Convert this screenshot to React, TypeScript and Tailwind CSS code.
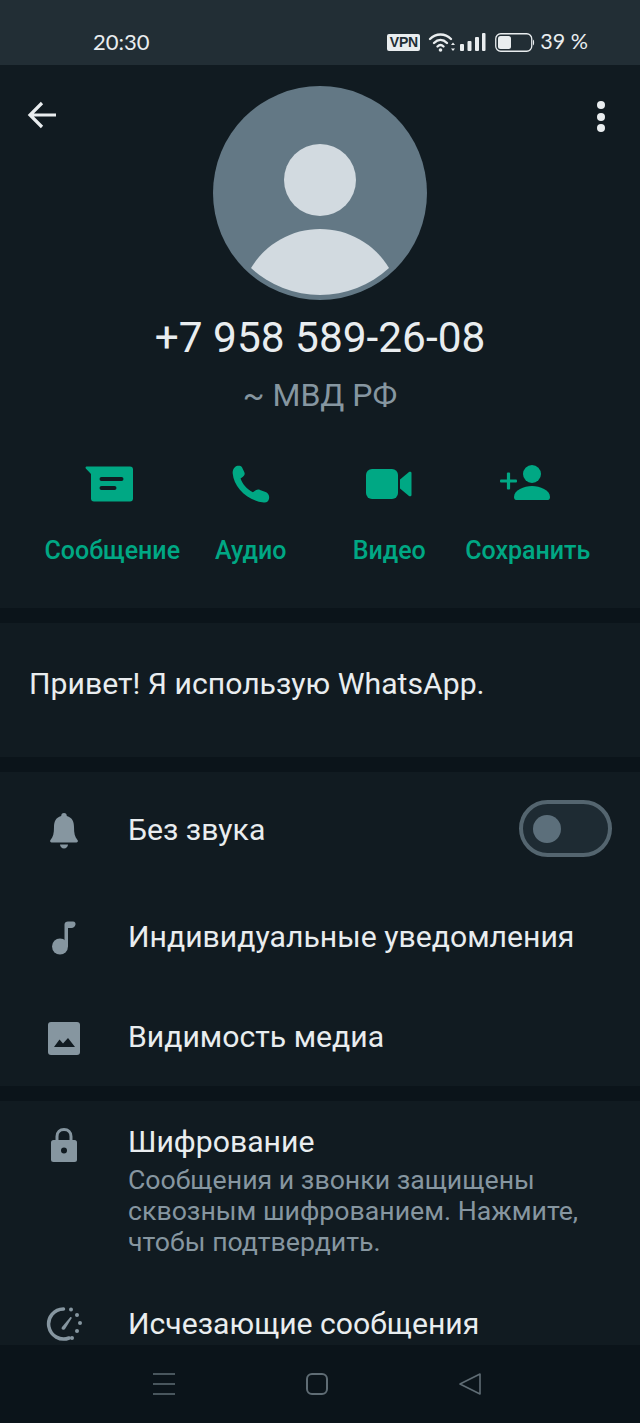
import React from 'react';

const font = { fontFamily: 'Roboto, sans-serif' };

const StatusBar = () => (
  <div className="h-[65px] shrink-0 bg-[#222e35] flex items-center pt-[19px] pl-[93px] pr-[52px] text-[#e9edef]">
    <span className="text-[22px] leading-none font-['Lato',sans-serif]">20:30</span>
    <div className="ml-auto flex items-center">
      <span className="w-[33px] h-[17px] rounded-[2px] bg-[#e9edef] text-[#222e35] text-[14px] font-bold leading-[17px] text-center font-['Liberation_Sans',sans-serif] tracking-[-0.3px]">VPN</span>
      <svg width="28" height="20" viewBox="0 0 28 20" className="ml-[8px]" fill="none" stroke="#e9edef" strokeLinecap="round">
        <path d="M2 7C8 1 17 1 23 7" strokeWidth="2.400" />
        <path d="M6 11c4-4 9-4 13 0" strokeWidth="2.400" />
        <path d="M9.500 14.500c2-2 4-2 6 0" strokeWidth="2.400" />
        <circle cx="12.500" cy="18" r="1.800" fill="#e9edef" stroke="none" />
        <path d="M25 10.500l2 2.500h-4zM25 19l2-2.500h-4z" fill="#e9edef" stroke="none" />
      </svg>
      <svg width="26" height="18" viewBox="0 0 26 18" className="ml-[4px]" fill="#e9edef">
        <rect x="0" y="11" width="4" height="7" rx="1" />
        <rect x="7.500" y="8" width="4" height="10" rx="1" />
        <rect x="15" y="4" width="4" height="14" rx="1" />
        <rect x="22" y="0" width="3.500" height="18" rx="1" />
      </svg>
      <svg width="40" height="19" viewBox="0 0 40 19" className="ml-[9px]" fill="none">
        <rect x="0.750" y="0.750" width="36" height="17.500" rx="5" stroke="#e9edef" strokeWidth="1.300" />
        <rect x="3" y="3" width="13" height="13" rx="2.500" fill="#e9edef" />
        <path d="M38 6.500c1.500.5 1.500 5.500 0 6z" fill="#e9edef" />
      </svg>
      <span className="ml-[5px] text-[21.500px] leading-none font-['Lato',sans-serif]">39 %</span>
    </div>
  </div>
);

const Avatar = () => (
  <svg width="214" height="214" viewBox="0 0 214 214" className="block">
    <circle cx="107" cy="107" r="107" fill="#637885" />
    <circle cx="107" cy="94" r="36" fill="#d2dae0" />
    <path d="M38 182A80.500 80.500 0 0 1 176 182A102 102 0 0 1 38 182Z" fill="#d2dae0" />
  </svg>
);

const actions = [
  {
    label: 'Сообщение',
    icon: (
      <svg width="49" height="36" viewBox="0 0 49 36" fill="#00a884" className="mr-[5px]">
        <path fillRule="evenodd" d="M1.500 0.500H45a3 3 0 0 1 3 3V32.500a3 3 0 0 1-3 3H9a3 3 0 0 1-3-3V8L.8 2.500C.2 1.600.6.500 1.500.500ZM16.500 11a2 2 0 0 0 0 4h20a2 2 0 0 0 0-4ZM16.500 20a2 2 0 0 0 0 4h13a2 2 0 0 0 0-4Z" />
      </svg>
    ),
  },
  {
    label: 'Аудио',
    icon: (
      <svg width="38" height="38" viewBox="0 0 40 42" preserveAspectRatio="none" fill="#00a884">
        <path d="M3 2.500C5 .5 9 .3 10.500 2.500L13 8c.8 2 .2 3.500-1.500 5L9 15c2 6 6.500 12 13 15l3-2c1.500-1 3-1 4.500-.5L36 30c2.500 1.500 3.500 4 3 7-.5 3-2.500 5-5.500 4.500C16 39 2 25 .7 9 .5 6.500 1.500 4 3 2.500Z" />
      </svg>
    ),
  },
  {
    label: 'Видео',
    icon: (
      <svg width="46" height="30" viewBox="0 0 46 30" fill="#00a884">
        <rect x="0" y="0" width="32" height="30" rx="6" />
        <path d="M34 10.500L43 3c1-.8 2.500-.2 2.500 1V26c0 1.200-1.500 1.800-2.500 1L34 19.500Z" />
      </svg>
    ),
  },
  {
    label: 'Сохранить',
    icon: (
      <svg width="50" height="36" viewBox="0 0 50 36" fill="#00a884" className="mr-[5px] mb-[3px]">
        <circle cx="32" cy="9" r="9" />
        <path d="M14 32C14 25 24 21 32 21S50 25 50 32c0 2-1 3-2 3H16c-1 0-2-1-2-3Z" />
        <rect x="0" y="14.400" width="17" height="3.200" rx="1" />
        <rect x="6.900" y="7.500" width="3.200" height="17" rx="1" />
      </svg>
    ),
  },
];

const Divider = () => <div className="h-[15px] bg-[#0b141a]" />;

const BellIcon = () => (
  <svg width="28" height="36" viewBox="0 0 28 36" fill="#8696a0">
    <path d="M14 0c1.800 0 2.800 1.200 2.800 3C22.500 4.500 24 9 24 14c0 6 .8 10 3.500 13 .8 1 .3 2.500-1 2.500H1.500c-1.300 0-1.800-1.500-1-2.500C3.200 24 4 20 4 14c0-5 1.500-9.500 7.200-11C11.200 1.200 12.200 0 14 0Z" />
    <path d="M10 31.500h8c0 2-1.800 4-4 4s-4-2-4-4Z" />
  </svg>
);

const NoteIcon = () => (
  <svg width="24" height="34" viewBox="0 0 24 34" fill="#8696a0">
    <circle cx="8" cy="25.500" r="8" />
    <path d="M12.500 3.500C12.500 1.500 14 .5 16 .5h5c2 0 2.800 1.500 2.500 3C23 5.800 21.500 7 19.500 7H16V25.500h-3.500Z" />
  </svg>
);

const MediaIcon = () => (
  <svg width="32" height="33" viewBox="0 0 32 33">
    <rect width="32" height="33" rx="3" fill="#8696a0" />
    <path d="M6 25L11.500 17.500L15 21.500L20 16L27 25Z" fill="#111b21" />
  </svg>
);

const LockIcon = () => (
  <svg width="26" height="34" viewBox="0 0 26 34">
    <path d="M6 13V8.500C6 4 9 1.500 13 1.500S20 4 20 8.500V13" fill="none" stroke="#8696a0" strokeWidth="3" />
    <rect y="12" width="26" height="22" rx="2.500" fill="#8696a0" />
    <circle cx="13" cy="22.500" r="3" fill="#111b21" />
  </svg>
);

const TimerIcon = () => (
  <svg width="36" height="36" viewBox="0 0 36 36" fill="#8696a0">
    <path d="M17.500 3A15 15 0 1 0 23 32" fill="none" stroke="#8696a0" strokeWidth="3.500" strokeLinecap="round" />
    <circle cx="25" cy="3.500" r="2" />
    <circle cx="31" cy="9" r="2" />
    <circle cx="34" cy="17" r="2" />
    <circle cx="31" cy="25" r="2" />
    <circle cx="26" cy="32" r="2" />
    <path d="M16 21L24 11.500C25 10.500 26 11.500 25.500 12.500L19 23C17 25 14.500 23 16 21Z" />
  </svg>
);

const Row = ({ icon, className, children }: { icon: React.ReactNode; className: string; children: React.ReactNode }) => (
  <div className={`flex items-center ${className}`}>
    <div className="w-[128px] shrink-0 flex justify-center">{icon}</div>
    {children}
  </div>
);

export default function App() {
  return (
    <div className="w-[640px] h-[1423px] overflow-hidden flex flex-col bg-[#111b21]" style={font}>
      <StatusBar />
      <main className="flex-1 overflow-hidden">
        <section className="relative h-[543px] pt-[21px] flex flex-col items-center">
          <svg width="30" height="28" viewBox="0 0 30 28" className="absolute left-[27px] top-[36px]" fill="none" stroke="#e9edef" strokeWidth="3.200">
            <path d="M29 14H3M15 2L3 14l12 12" />
          </svg>
          <div className="absolute left-[597px] top-[36px] flex flex-col gap-[3.500px]">
            <span className="w-[8px] h-[8px] rounded-full bg-[#e9edef]" />
            <span className="w-[8px] h-[8px] rounded-full bg-[#e9edef]" />
            <span className="w-[8px] h-[8px] rounded-full bg-[#e9edef]" />
          </div>
          <Avatar />
          <h1 className="mt-[14px] text-[42.400px] leading-[48px] font-normal text-[#e9edef]">+7 958 589-26-08</h1>
          <p className="mt-[15px] text-[32px] leading-[36px] text-[#8696a0]">~ МВД РФ</p>
          <div className="mt-[51px] w-full px-[43px] grid grid-cols-4">
            {actions.map((a) => (
              <div key={a.label} className="flex flex-col items-center">
                <div className="h-[42px] pb-[2px] flex items-center justify-center">{a.icon}</div>
                <span className="mt-[29px] text-[25px] leading-[32px] font-medium text-[#00a884] whitespace-nowrap">{a.label}</span>
              </div>
            ))}
          </div>
        </section>
        <Divider />
        <section className="h-[134px] pl-[29px] flex items-center pb-[13px]">
          <p className="text-[30.200px] leading-[36px] text-[#e9edef]">Привет! Я использую WhatsApp.</p>
        </section>
        <Divider />
        <section className="h-[314px] flex flex-col">
          <Row icon={<BellIcon />} className="h-[118px]">
            <span className="text-[30.200px] text-[#e9edef] mb-[2px]">Без звука</span>
            <div className="ml-auto mr-[28px] mb-[5px] w-[93px] h-[57px] rounded-full border-[4px] border-[#54656f] bg-[#1e2b33] flex items-center pl-[10px]">
              <span className="w-[28px] h-[28px] rounded-full bg-[#5c6f7b]" />
            </div>
          </Row>
          <Row icon={<NoteIcon />} className="h-[96px]">
            <span className="text-[30.200px] text-[#e9edef] mb-[2px]">Индивидуальные уведомления</span>
          </Row>
          <Row icon={<MediaIcon />} className="h-[100px] pt-[4px]">
            <span className="text-[30.200px] text-[#e9edef] mb-[2px]">Видимость медиа</span>
          </Row>
        </section>
        <Divider />
        <section className="pt-[23px]">
          <div className="flex items-start">
            <div className="w-[128px] shrink-0 flex justify-center pt-[4px]"><LockIcon /></div>
            <div>
              <p className="text-[30.200px] leading-[36px] text-[#e9edef]">Шифрование</p>
              <p className="mt-[5px] text-[26.700px] leading-[31px] text-[#8696a0] w-[470px]">Сообщения и звонки защищены сквозным шифрованием. Нажмите, чтобы подтвердить.</p>
            </div>
          </div>
          <div className="flex items-start mt-[48px]">
            <div className="w-[128px] shrink-0 flex justify-center"><TimerIcon /></div>
            <p className="text-[30.200px] leading-[36px] text-[#e9edef]">Исчезающие сообщения</p>
          </div>
        </section>
      </main>
      <nav className="h-[78px] shrink-0 bg-[#0b141a] flex justify-center items-center pr-[6px]">
        <div className="w-[153px] flex justify-center">
          <svg width="24" height="24" viewBox="0 0 24 24" stroke="#5f6c74" strokeWidth="1.600" fill="none">
            <path d="M1 2h22M1 12h22M1 22h22" />
          </svg>
        </div>
        <div className="w-[153px] flex justify-center">
          <div className="w-[22px] h-[22px] rounded-[6px] border-[2px] border-[#5f6c74]" />
        </div>
        <div className="w-[153px] flex justify-center">
          <svg width="24" height="24" viewBox="0 0 24 24" stroke="#5f6c74" strokeWidth="1.600" fill="none" strokeLinejoin="round">
            <path d="M22 2v20L2 12Z" />
          </svg>
        </div>
      </nav>
    </div>
  );
}
